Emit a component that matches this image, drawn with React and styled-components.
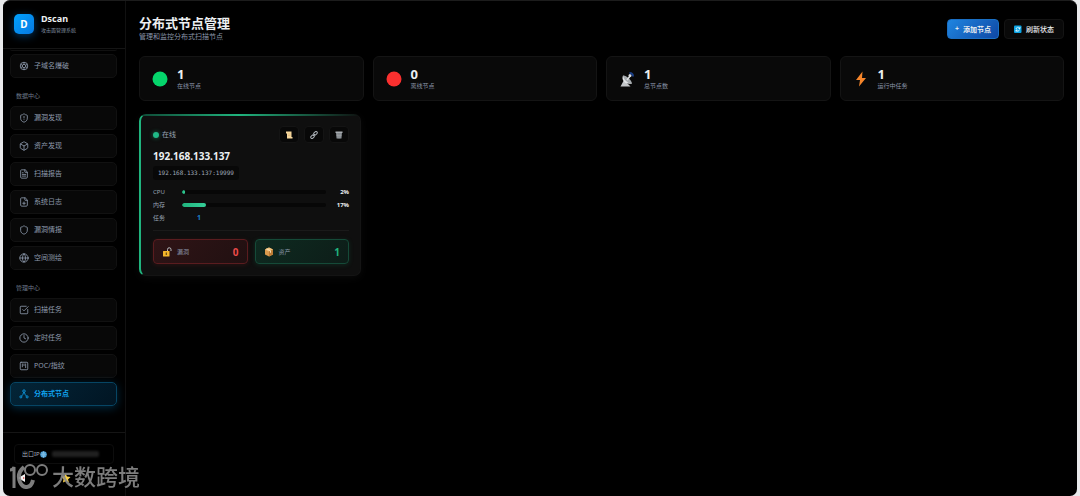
import React from 'react'
import styled, { createGlobalStyle, css } from 'styled-components'
import { Box, Clock, FilePlus, FileText, Globe, Shield, ShieldAlert, SquareCheckBig, SquareKanban } from 'lucide-react'

const GlobalStyle = createGlobalStyle`
    * {
        box-sizing: border-box;
    }
    body {
        margin: 0;
        background-color: #e9eaec;
        color: #eceff1;
        font-family: "Noto Sans", "Noto Sans CJK SC", sans-serif;
        font-size: 7px;
        line-height: 10px;
    }
    button {
        font-family: inherit;
        cursor: pointer;
    }
    svg {
        display: block;
        flex-shrink: 0;
    }
    h1, h2, p {
        margin: 0;
    }
`;
const StyledApp = styled.div`
    display: flex;
    min-height: 100vh;
    margin: 0 3px;
    border-top: 1px solid #1c1c1c;
    border-radius: 7px;
    background-color: #000000;
    overflow: hidden;
`;
const StyledSidebar = styled.aside`
    display: flex;
    flex-direction: column;
    flex-shrink: 0;
    width: 123px;
    border-right: 1px solid #111111;
`;
const StyledBrand = styled.div`
    display: flex;
    align-items: center;
    gap: 7px;
    height: 48px;
    padding: 0 11px 2px;
    border-bottom: 1px solid #151515;
`;
const StyledLogo = styled.div`
    display: flex;
    align-items: center;
    justify-content: center;
    width: 20px;
    height: 20px;
    border-radius: 5px;
    background: linear-gradient(135deg, #00a2ff, #0878e0);
    box-shadow: 0 2px 8px rgba(0, 140, 255, 0.4);
    color: #ffffff;
    font-size: 10px;
    font-weight: 700;
`;
const StyledBrandName = styled.div`
    font-size: 9px;
    font-weight: 700;
    line-height: 12px;
`;
const StyledBrandText = styled.div`
    color: #8390a3;
    font-size: 5px;
    line-height: 10px;
`;
const StyledNav = styled.nav`
    flex: 1;
    padding: 0 8px 0 7px;
`;
const StyledScrolled = styled.div`
    height: 2px;
    margin-bottom: 3px;
    border-bottom: 1px solid #101010;
    border-radius: 0 0 5px 5px;
`;
const StyledNavLabel = styled.div`
    height: 28px;
    padding: 13px 6px 0;
    color: #6d7889;
    font-size: 6px;
`;
const StyledNavList = styled.div`
    display: flex;
    flex-direction: column;
    gap: 4px;
`;
const StyledNavLink = styled.a`
    display: flex;
    align-items: center;
    gap: 5px;
    height: 24px;
    padding: 0 8px;
    border: 1px solid #111111;
    border-radius: 5px;
    background-color: #080808;
    color: #8e9aad;
    text-decoration: none;
    ${({ $active }) => $active && css`
        border-color: #064564;
        background: linear-gradient(135deg, #032538, #011523);
        box-shadow: 0 2px 10px rgba(0, 120, 190, 0.35);
        color: #10a5f0;
        font-weight: 700;
    `}
`;
const StyledFooter = styled.div`
    height: 64px;
    padding: 11px 11px 0;
    border-top: 1px solid #151515;
`;
const StyledIpBox = styled.div`
    display: flex;
    align-items: center;
    height: 20px;
    padding: 0 7px;
    border: 1px solid #0d0d0d;
    border-radius: 4px;
    color: #a0abbb;
    font-size: 6px;
`;
const StyledMasked = styled.span`
    flex: 1;
    height: 6px;
    margin: 0 7px 0 5px;
    border-radius: 2px;
    background-color: #202020;
    filter: blur(1px);
`;
const StyledFooterIcons = styled.div`
    display: flex;
    gap: 35px;
    padding: 9px 3px;
`;
const StyledIconButton = styled.button`
    padding: 0;
    border: 0;
    background: none;
`;
const StyledWatermark = styled.div`
    position: absolute;
    left: 10px;
    bottom: 7px;
    display: flex;
    align-items: center;
    gap: 4px;
    color: #8b8b8b;
    font-size: 22px;
    font-weight: 500;
    line-height: 26px;
    white-space: nowrap;
    opacity: 0.9;
    pointer-events: none;
    z-index: 1;
`;
const StyledMain = styled.main`
    flex: 1;
    min-width: 0;
    padding: 15px 13px;
`;
const StyledHeader = styled.header`
    display: flex;
    align-items: center;
    justify-content: space-between;
    height: 25px;
    margin-bottom: 15px;
`;
const StyledTitle = styled.h1`
    font-size: 13px;
    font-weight: 700;
    line-height: 17px;
`;
const StyledSubtitle = styled.p`
    color: #8995a8;
`;
const StyledActions = styled.div`
    display: flex;
    gap: 5px;
`;
const StyledButton = styled.button`
    display: flex;
    align-items: center;
    justify-content: center;
    gap: 4px;
    height: 20px;
    padding: 0 ${({ $primary }) => ($primary ? '7px' : '9px')};
    border: 1px solid ${({ $primary }) => ($primary ? '#1a6fc4' : '#141414')};
    border-radius: 4px;
    background: ${({ $primary }) => ($primary ? 'linear-gradient(135deg, #1f85e0, #0f48a5)' : '#090909')};
    color: #eceff1;
    font-size: 7px;
    font-weight: ${({ $primary }) => ($primary ? 700 : 500)};
`;
const StyledStats = styled.div`
    display: grid;
    grid-template-columns: repeat(4, 1fr);
    gap: 9px;
    margin-bottom: 13px;
`;
const StyledStat = styled.div`
    display: flex;
    align-items: center;
    gap: 9px;
    height: 45px;
    padding: 1px 12px 0;
    border: 1px solid #141414;
    border-radius: 6px;
    background-color: #090909;
`;
const StyledStatValue = styled.div`
    font-size: 13px;
    font-weight: 700;
    line-height: 14px;
`;
const StyledStatLabel = styled.div`
    color: #8995a8;
    font-size: 6px;
`;
const StyledNodes = styled.div`
    display: grid;
    grid-template-columns: repeat(auto-fill, 222px);
    gap: 9px;
`;
const StyledNode = styled.article`
    padding: 11px 11px 11px 12px;
    border: 1px solid #141414;
    border-top-color: transparent;
    border-left: 2px solid #20b47e;
    border-radius: 7px;
    background:
        linear-gradient(90deg, #0f4a36, #20b47e 45%, transparent) top / 100% 2px no-repeat border-box,
        #0f0f0f;
    box-shadow: 0 2px 8px rgba(255, 255, 255, 0.04);
`;
const StyledNodeTop = styled.div`
    display: flex;
    align-items: center;
    justify-content: space-between;
`;
const StyledStatus = styled.div`
    display: flex;
    align-items: center;
    gap: 3px;
    color: #98a3b3;
`;
const StyledDot = styled.span`
    width: 6px;
    height: 6px;
    border-radius: 50%;
    background-color: #20b987;
    box-shadow: 0 0 4px rgba(32, 185, 135, 0.6);
`;
const StyledTools = styled.div`
    display: flex;
    gap: 5px;
`;
const StyledTool = styled.button`
    display: flex;
    align-items: center;
    justify-content: center;
    width: 20px;
    height: 17px;
    padding: 0;
    border: 1px solid #141414;
    border-radius: 4px;
    background-color: #080808;
`;
const StyledNodeName = styled.h2`
    margin-top: 6px;
    font-size: 10px;
    font-weight: 700;
    line-height: 14px;
`;
const StyledAddress = styled.div`
    width: fit-content;
    margin-top: 3px;
    padding: 2px 5px;
    border-radius: 3px;
    background-color: #080808;
    color: #a0abbb;
    font-family: "DejaVu Sans Mono", monospace;
    font-size: 6px;
`;
const StyledMetrics = styled.div`
    display: grid;
    gap: 3px;
    margin: 7px 0;
`;
const StyledMetric = styled.div`
    display: grid;
    grid-template-columns: 24px 1fr 18px;
    align-items: center;
    gap: 5px;
    color: #98a3b3;
    font-size: 6px;
`;
const StyledTrack = styled.div`
    height: 4px;
    border-radius: 2px;
    background-color: #070707;
    overflow: hidden;
`;
const StyledFill = styled.div`
    height: 100%;
    border-radius: 2px;
    background: linear-gradient(90deg, #20b47e, #35cf98);
`;
const StyledPercent = styled.span`
    color: #eceff1;
    font-weight: 700;
    text-align: right;
`;
const StyledTaskCount = styled.span`
    padding-left: 15px;
    color: #1c7fcb;
    font-size: 7px;
    font-weight: 700;
`;
const StyledTotals = styled.div`
    display: grid;
    grid-template-columns: 1fr 1fr;
    gap: 7px;
    padding-top: 8px;
    border-top: 1px solid #1a1a1a;
`;
const StyledTotal = styled.button`
    display: flex;
    align-items: center;
    gap: 5px;
    height: 25px;
    padding: 0 8px;
    border: 1px solid ${({ $tone }) => ($tone === 'red' ? '#5a1c1f' : '#154a38')};
    border-radius: 4px;
    background: ${({ $tone }) => ($tone === 'red' ? 'linear-gradient(135deg, #2f1416, #211011)' : 'linear-gradient(135deg, #0e2a20, #0d1d18)')};
    box-shadow: 0 1px 5px ${({ $tone }) => ($tone === 'red' ? 'rgba(200, 40, 40, 0.15)' : 'rgba(30, 180, 120, 0.15)')};
    color: #8995a8;
    font-size: 6px;
    strong {
        margin-left: auto;
        color: ${({ $tone }) => ($tone === 'red' ? '#ec4a4a' : '#20b47e')};
        font-size: 10px;
    }
`;

const SubdomainIcon = () => (
    <svg width="10" height="10" viewBox="0 0 24 24" fill="none" stroke="currentColor" strokeWidth="2">
        <circle cx="12" cy="12" r="9" />
        <circle cx="12" cy="12" r="4" />
        <path d="M12 3v5M12 16v5M4 8l4 2M20 8l-4 2M4 16l4-2M20 16l-4-2" />
    </svg>
)
const NodesIcon = () => (
    <svg width="10" height="10" viewBox="0 0 24 24" fill="none" stroke="currentColor" strokeWidth="2">
        <circle cx="12" cy="5" r="3" />
        <circle cx="4.500" cy="19" r="2.500" />
        <circle cx="19.500" cy="19" r="2.500" />
        <path d="M11 8q-1 6-5 9M13 8q1 6 5 9" />
    </svg>
)
const CircleIcon = ({ color }) => (
    <svg width="16" height="16" viewBox="0 0 16 16">
        <circle cx="8" cy="8" r="7.500" fill={color} />
    </svg>
)
const DishIcon = () => (
    <svg width="16" height="16" viewBox="0 0 32 32">
        <path d="M3 31l7-13 13 13z" fill="#c3c6c9" />
        <path d="M8 9c-4 9 4 19 18 16z" fill="#e4e6e8" />
        <path d="M8 9c6-1 17 9 18 16-7 1-17-7-18-16z" fill="#a6abaf" />
        <path d="M16 18l7-9" stroke="#dfe2e4" strokeWidth="3" />
        <circle cx="22" cy="9" r="3" fill="#dfe2e4" />
        <path d="M21 4q7 0 7 7" stroke="#1b3f86" strokeWidth="4" fill="none" />
    </svg>
)
const BoltIcon = () => (
    <svg width="16" height="16" viewBox="0 0 32 32">
        <path d="M19 1L6 18h8l-2 13 14-17h-8z" fill="#f5852a" />
    </svg>
)
const RefreshIcon = () => (
    <svg width="8" height="8" viewBox="0 0 16 16">
        <rect y="1" width="15" height="15" rx="2" fill="#0ba5e6" />
        <path d="M4 8a4 4 0 0 1 7-2M11 9a4 4 0 0 1-7 2M12 4v3H9M4 13v-3h3" stroke="#ffffff" strokeWidth="1.600" fill="none" />
    </svg>
)
const ScrollIcon = () => (
    <svg width="8" height="8" viewBox="0 0 16 16">
        <path d="M2 1h11v11h2v3H4V5H2z" fill="#f5d69c" />
        <path d="M6 6h5M6 9h5" stroke="#d9ad6c" />
    </svg>
)
const LinkIcon = () => (
    <svg width="8" height="8" viewBox="0 0 16 16" fill="none" stroke="#a9afb5" strokeWidth="2">
        <rect x="7" y="2" width="8" height="5" rx="2.500" transform="rotate(-45 11 4.500)" />
        <rect x="1" y="9" width="8" height="5" rx="2.500" transform="rotate(-45 5 11.500)" />
        <path d="M6 10l4-4" />
    </svg>
)
const TrashIcon = () => (
    <svg width="8" height="8" viewBox="0 0 16 16">
        <path d="M1 1h14v3H1z" fill="#a9adb1" />
        <path d="M2 4h12l-1 11H3z" fill="#7f8489" />
        <path d="M5 5l1 10M8 5v10M11 5l-1 10M3 9h10" stroke="#a2a6aa" />
    </svg>
)
const LockIcon = () => (
    <svg width="10" height="10" viewBox="0 0 20 20">
        <path d="M11 9V5a3 3 0 0 1 7 0v3" fill="none" stroke="#b8bcc0" strokeWidth="2" />
        <rect x="2" y="8" width="13" height="11" rx="1" fill="#f5b52b" />
        <path d="M8.500 11v5" stroke="#4a3510" strokeWidth="2" />
    </svg>
)
const PackageIcon = () => (
    <svg width="10" height="10" viewBox="0 0 20 20">
        <path d="M10 1l8 4v10l-8 4-8-4V5z" fill="#d99a4d" />
        <path d="M10 1l8 4-8 4-8-4z" fill="#f1c27d" />
        <path d="M10 9l8-4v10l-8 4z" fill="#bd7c35" />
        <path d="M5 3.500l8 4v4" stroke="#f7dfb5" strokeWidth="2" fill="none" />
    </svg>
)
const EarthIcon = () => (
    <svg width="7" height="7" viewBox="0 0 14 14">
        <circle cx="7" cy="7" r="6.500" fill="#3d94cf" />
        <path d="M1 7h12M7 1v12M2 4h10M2 10h10M7 1q-5 6 0 12q5-6 0-12" stroke="#a5d5ef" strokeWidth="0.800" fill="none" />
    </svg>
)
const WatermarkLogo = () => (
    <svg width="38" height="26" viewBox="0 0 38 26" fill="none" stroke="currentColor" strokeWidth="3">
        <path d="M0 7q3 0 4-3v21" />
        <path d="M14 4c-6 5-6 10-4 15 3 7 11 7 13-2" strokeWidth="4" />
        <circle cx="20" cy="7" r="5" strokeWidth="2" />
        <circle cx="32" cy="7" r="5" strokeWidth="2" />
    </svg>
)

const dataLinks = [
    { text: '漏洞发现', Icon: ShieldAlert },
    { text: '资产发现', Icon: Box },
    { text: '扫描报告', Icon: FileText },
    { text: '系统日志', Icon: FilePlus },
    { text: '漏洞情报', Icon: Shield },
    { text: '空间测绘', Icon: Globe },
]
const manageLinks = [
    { text: '扫描任务', Icon: SquareCheckBig },
    { text: '定时任务', Icon: Clock },
    { text: 'POC/指纹', Icon: SquareKanban },
    { text: '分布式节点', Icon: NodesIcon, active: true },
]
const stats = [
    { value: 1, label: '在线节点', icon: <CircleIcon color="#05d56b" /> },
    { value: 0, label: '离线节点', icon: <CircleIcon color="#fa302f" /> },
    { value: 1, label: '总节点数', icon: <DishIcon /> },
    { value: 1, label: '运行中任务', icon: <BoltIcon /> },
]
const usage = [
    { label: 'CPU', value: 2 },
    { label: '内存', value: 17 },
]

const NavLinks = ({ links }) => (
    <StyledNavList>
        {links.map(({ text, Icon, active }) => (
            <StyledNavLink key={text} href="#" $active={active} aria-current={active ? 'page' : undefined}>
                <Icon size={10} />
                {text}
            </StyledNavLink>
        ))}
    </StyledNavList>
)

const Sidebar = () => (
    <StyledSidebar>
        <StyledBrand>
            <StyledLogo>D</StyledLogo>
            <div>
                <StyledBrandName>Dscan</StyledBrandName>
                <StyledBrandText>攻击面管理系统</StyledBrandText>
            </div>
        </StyledBrand>
        <StyledNav>
            <StyledScrolled />
            <NavLinks links={[{ text: '子域名爆破', Icon: SubdomainIcon }]} />
            <StyledNavLabel>数据中心</StyledNavLabel>
            <NavLinks links={dataLinks} />
            <StyledNavLabel>管理中心</StyledNavLabel>
            <NavLinks links={manageLinks} />
        </StyledNav>
        <StyledFooter>
            <StyledIpBox>
                出口IP
                <EarthIcon />
                <StyledMasked />
            </StyledIpBox>
            <StyledFooterIcons>
                <StyledIconButton type="button">
                    <svg width="9" height="10" viewBox="0 0 9 10">
                        <path d="M8 1v8L1 5z" fill="#f4f4f4" />
                        <path d="M6 4l2 1-2 1z" fill="#d94b4b" />
                    </svg>
                </StyledIconButton>
                <StyledIconButton type="button">
                    <svg width="10" height="10" viewBox="0 0 20 20">
                        <path d="M9 1l3 6 7 1-5 5 2 6-6-3-6 3 1-7-4-5 6-1z" fill="#f8cf43" />
                    </svg>
                </StyledIconButton>
            </StyledFooterIcons>
        </StyledFooter>
    </StyledSidebar>
)

const NodeCard = () => (
    <StyledNode>
        <StyledNodeTop>
            <StyledStatus>
                <StyledDot />
                在线
            </StyledStatus>
            <StyledTools>
                <StyledTool type="button"><ScrollIcon /></StyledTool>
                <StyledTool type="button"><LinkIcon /></StyledTool>
                <StyledTool type="button"><TrashIcon /></StyledTool>
            </StyledTools>
        </StyledNodeTop>
        <StyledNodeName>192.168.133.137</StyledNodeName>
        <StyledAddress>192.168.133.137:19999</StyledAddress>
        <StyledMetrics>
            {usage.map(({ label, value }) => (
                <StyledMetric key={label}>
                    <span>{label}</span>
                    <StyledTrack>
                        <StyledFill style={{ width: `${value}%` }} />
                    </StyledTrack>
                    <StyledPercent>{value}%</StyledPercent>
                </StyledMetric>
            ))}
            <StyledMetric>
                <span>任务</span>
                <StyledTaskCount>1</StyledTaskCount>
            </StyledMetric>
        </StyledMetrics>
        <StyledTotals>
            <StyledTotal type="button" $tone="red">
                <LockIcon />
                漏洞
                <strong>0</strong>
            </StyledTotal>
            <StyledTotal type="button" $tone="green">
                <PackageIcon />
                资产
                <strong>1</strong>
            </StyledTotal>
        </StyledTotals>
    </StyledNode>
)

const App = () => {

    return (
        <>
            <GlobalStyle />
            <StyledApp lang="zh-CN">
                <Sidebar />
                <StyledMain>
                    <StyledHeader>
                        <div>
                            <StyledTitle>分布式节点管理</StyledTitle>
                            <StyledSubtitle>管理和监控分布式扫描节点</StyledSubtitle>
                        </div>
                        <StyledActions>
                            <StyledButton type="button" $primary>
                                <span>+</span>
                                添加节点
                            </StyledButton>
                            <StyledButton type="button">
                                <RefreshIcon />
                                刷新状态
                            </StyledButton>
                        </StyledActions>
                    </StyledHeader>
                    <StyledStats>
                        {stats.map(({ value, label, icon }) => (
                            <StyledStat key={label}>
                                {icon}
                                <div>
                                    <StyledStatValue>{value}</StyledStatValue>
                                    <StyledStatLabel>{label}</StyledStatLabel>
                                </div>
                            </StyledStat>
                        ))}
                    </StyledStats>
                    <StyledNodes>
                        <NodeCard />
                    </StyledNodes>
                </StyledMain>
                <StyledWatermark>
                    <WatermarkLogo />
                    大数跨境
                </StyledWatermark>
            </StyledApp>
        </>
    )
}
export default App
